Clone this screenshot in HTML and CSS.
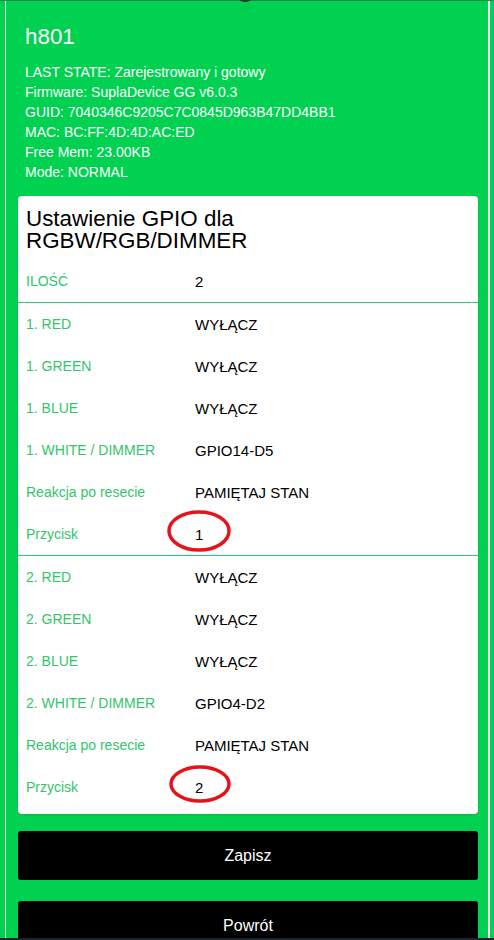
FILE: index.html
```html
<!DOCTYPE html>
<html lang="pl">
<head>
<meta charset="utf-8">
<title>h801</title>
<link rel="stylesheet" href="styles.css">
</head>
<body>
<div class="topline"></div>
<div class="logo-tip"></div>
<div class="wrap">
  <header class="head">
    <h1 class="dev">h801</h1>
    <div class="info">
      <div>LAST STATE: Zarejestrowany i gotowy</div>
      <div>Firmware: SuplaDevice GG v6.0.3</div>
      <div>GUID: 7040346C9205C7C0845D963B47DD4BB1</div>
      <div>MAC: BC:FF:4D:4D:AC:ED</div>
      <div>Free Mem: 23.00KB</div>
      <div>Mode: NORMAL</div>
    </div>
  </header>

  <section class="card">
    <h2 class="title">Ustawienie GPIO dla RGBW/RGB/DIMMER</h2>
    <div class="group">
      <div class="row"><span class="lbl">ILOŚĆ</span><span class="val">2</span></div>
    </div>
    <div class="group sep">
      <div class="row"><span class="lbl">1. RED</span><span class="val">WYŁĄCZ</span></div>
      <div class="row"><span class="lbl">1. GREEN</span><span class="val">WYŁĄCZ</span></div>
      <div class="row"><span class="lbl">1. BLUE</span><span class="val">WYŁĄCZ</span></div>
      <div class="row"><span class="lbl">1. WHITE / DIMMER</span><span class="val">GPIO14-D5</span></div>
      <div class="row"><span class="lbl">Reakcja po resecie</span><span class="val">PAMIĘTAJ STAN</span></div>
      <div class="row"><span class="lbl">Przycisk</span><span class="val mark">1<svg class="ring ring1" width="70" height="48" viewBox="0 0 70 48"><ellipse cx="35" cy="24" rx="30" ry="19" fill="none" stroke="#e3141c" stroke-width="3.5"/></svg></span></div>
    </div>
    <div class="group sep">
      <div class="row"><span class="lbl">2. RED</span><span class="val">WYŁĄCZ</span></div>
      <div class="row"><span class="lbl">2. GREEN</span><span class="val">WYŁĄCZ</span></div>
      <div class="row"><span class="lbl">2. BLUE</span><span class="val">WYŁĄCZ</span></div>
      <div class="row"><span class="lbl">2. WHITE / DIMMER</span><span class="val">GPIO4-D2</span></div>
      <div class="row"><span class="lbl">Reakcja po resecie</span><span class="val">PAMIĘTAJ STAN</span></div>
      <div class="row"><span class="lbl">Przycisk</span><span class="val mark">2<svg class="ring ring2" width="70" height="44" viewBox="0 0 70 44"><ellipse cx="35" cy="22" rx="29" ry="17" fill="none" stroke="#e3141c" stroke-width="3.5"/></svg></span></div>
    </div>
  </section>

  <button class="btn btn-save">Zapisz</button>
  <button class="btn btn-back">Powrót</button>
</div>
<div class="taskbar"></div>
</body>
</html>
```

FILE: styles.css
```css
* { box-sizing: border-box; }
html, body { margin: 0; padding: 0; }
body {
  background: #00d151;
  font-family: "Liberation Sans", Arial, sans-serif;
  width: 494px;
  height: 940px;
  overflow: hidden;
  position: relative;
}
.topline {
  position: absolute; left: 0; top: 0; width: 494px; height: 1px;
  background: #1e8a4a;
}
.logo-tip {
  position: absolute; left: 239px; top: -4px; width: 12px; height: 6px;
  border-radius: 50%; background: #2a3a30;
}
.wrap {
  margin-left: 5px;
  width: 485px;
  min-height: 940px;
  border-left: 1px solid #ffffff;
  border-right: 2px solid #f4fff8;
  padding: 0 10px 0 12px;
}
.head { padding: 24px 0 0 7px; color: #ffffff; }
.dev {
  margin: 0;
  font-weight: normal;
  font-size: 22.4px;
  line-height: 26px;
}
.info {
  margin-top: 12px;
  font-size: 14px;
  line-height: 20px;
}
.card {
  margin-top: 14px;
  background: #ffffff;
  border-radius: 4px;
  box-shadow: 0 1px 2px rgba(0,0,0,0.12);
  padding: 12px 0 6px;
}
.title {
  margin: 0 8px 8px;
  max-width: 300px;
  font-weight: normal;
  font-size: 22.4px;
  line-height: 22px;
  color: #000000;
}
.sep { border-top: 1px solid #2ecc71; }
.row {
  display: grid;
  grid-template-columns: 169px 1fr;
  align-items: center;
  height: 42px;
  padding-left: 8px;
}
.lbl { color: #34c46c; font-size: 14px; }
.val { color: #000000; font-size: 15px; }
.mark { position: relative; }
.ring { position: absolute; pointer-events: none; }
.ring1 { left: -31px; top: -19px; }
.ring2 { left: -30px; top: -17px; }
.btn {
  display: block;
  width: 460px;
  height: 49px;
  border: 0;
  border-radius: 3px;
  background: #000000;
  color: #ffffff;
  font-family: "Liberation Sans", Arial, sans-serif;
  font-size: 16px;
  padding: 0;
}
.btn-save { margin-top: 17px; }
.btn-back { margin-top: 21px; }
.taskbar {
  position: absolute; left: 0; bottom: 0; width: 494px; height: 2px;
  background: #1a2430;
}
```
